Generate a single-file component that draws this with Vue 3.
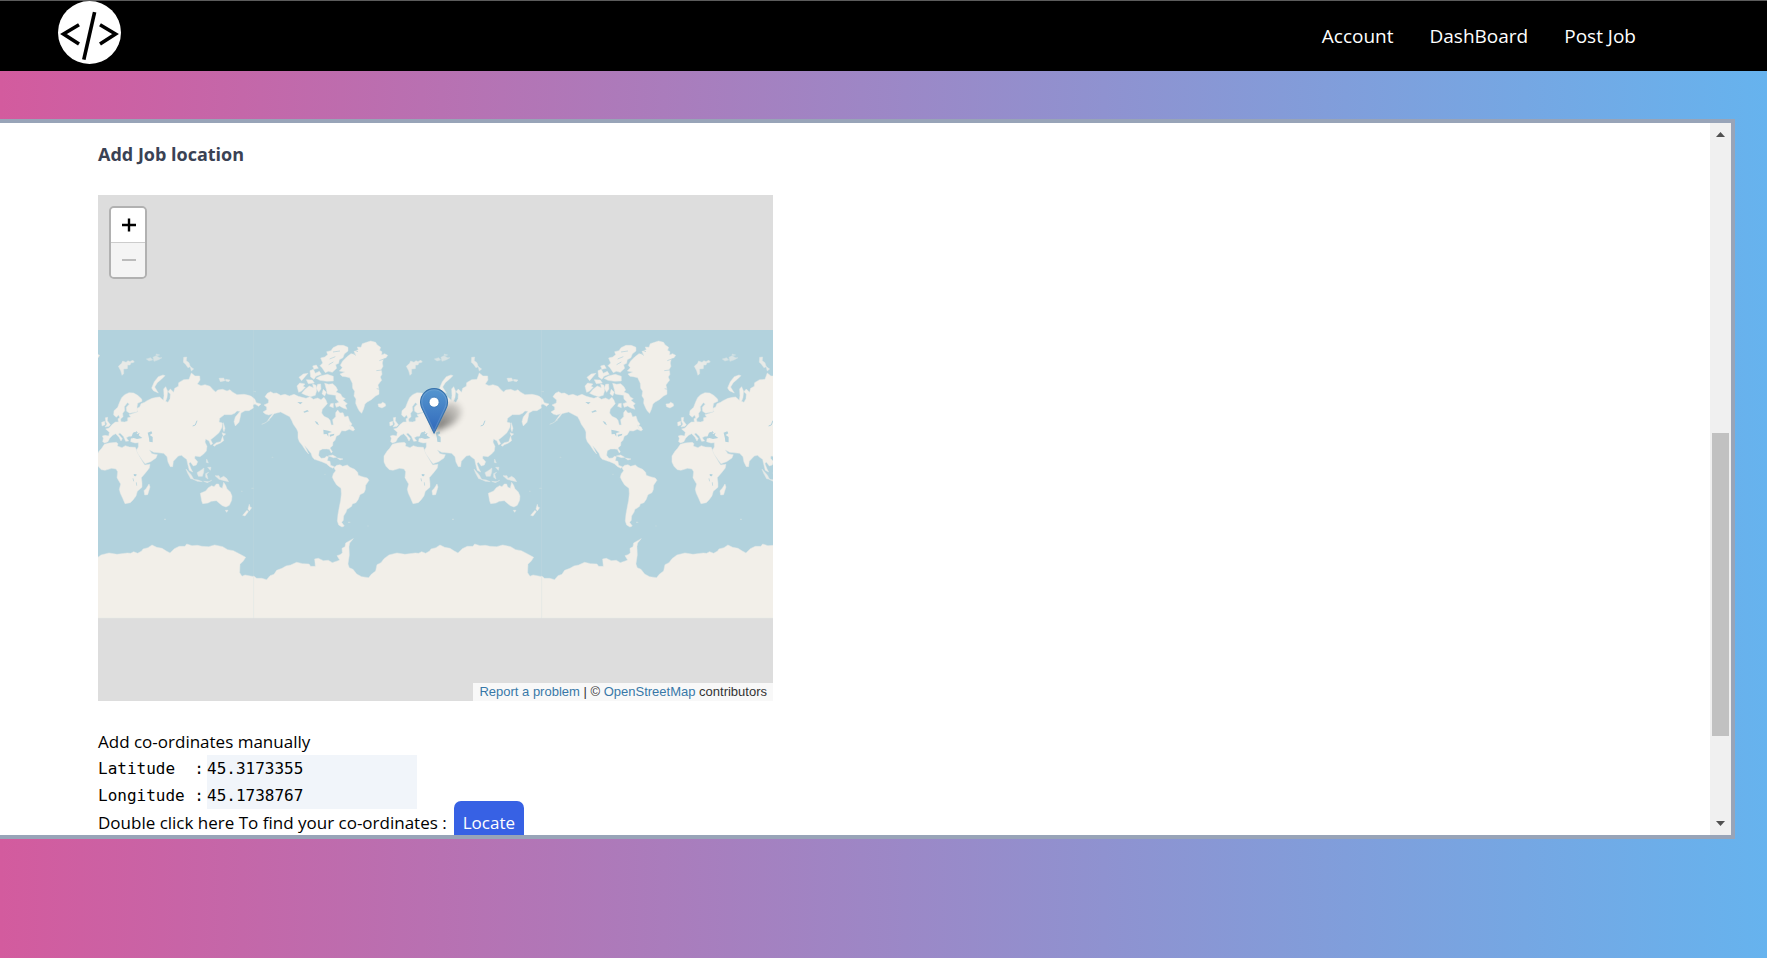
<script setup>
import { ref } from 'vue'

const links = ['Account', 'DashBoard', 'Post Job']
const latitude = ref('45.3173355')
const longitude = ref('45.1738767')
const worldOffsets = [-864, 0, 864]
</script>

<template>
  <div class="page">
    <header class="topbar">
      <a href="#" class="logo" aria-label="Home">
        <svg viewBox="0 0 63 63" width="63" height="63" aria-hidden="true">
          <circle cx="31.5" cy="31.5" r="31.5" fill="#fff" />
          <g fill="none" stroke="#000" stroke-width="3.6">
            <path d="M21 23.8 L5.5 33 L21 43" />
            <path d="M42 23.8 L57.5 33 L42 43" />
            <path d="M36.6 11.2 L25.8 58.6" />
          </g>
        </svg>
      </a>
      <nav class="nav">
        <a v-for="link in links" :key="link" href="#">{{ link }}</a>
      </nav>
    </header>

    <main class="panel">
      <section class="content">
        <h2 class="title">Add Job location</h2>

        <div class="map">
          <svg class="tiles" viewBox="0 0 675 506" width="675" height="506" role="img" aria-label="World map">
            <defs>
              <linearGradient id="pinFill" x1="0" y1="0" x2="0" y2="1">
                <stop offset="0" stop-color="#5596cf" />
                <stop offset="1" stop-color="#3068bb" />
              </linearGradient>
              <filter id="soft" x="-50%" y="-50%" width="200%" height="200%">
                <feGaussianBlur stdDeviation="3" />
              </filter>
              <linearGradient id="shade" x1="0" y1="1" x2="1" y2="0">
                <stop offset="0" stop-color="#000" stop-opacity=".85" />
                <stop offset="1" stop-color="#000" stop-opacity=".08" />
              </linearGradient>
              <g id="world">
                <g fill="#f2efe9" stroke="#e4e9e6" stroke-width="1.5" stroke-linejoin="round">
                  <path d="M45 215 L52 205 L62 200 L70 205 L80 204 L92 211 L105 208 L118 213 L132 208 L145 214 L156 217 L168 220 L180 215 L190 223 L203 219 L213 224 L222 217 L228 226 L232 236 L224 245 L217 253 L215 264 L222 274 L235 280 L240 286 L244 300 L250 300 L248 284 L257 275 L257 263 L263 255 L270 264 L279 263 L284 276 L294 273 L299 288 L306 297 L300 306 L312 313 L310 318 L298 313 L286 318 L275 317 L268 329 L259 334 L255 346 L249 352 L248 362 L240 369 L247 380 L244 384 L238 373 L230 372 L218 372 L208 377 L206 391 L213 400 L224 399 L229 394 L235 395 L232 407 L240 409 L242 421 L253 425 L249 430 L239 425 L229 416 L215 410 L202 406 L193 403 L187 396 L183 385 L172 371 L164 362 L176 387 L168 378 L156 360 L148 350 L144 339 L144 321 L140 312 L130 298 L126 288 L119 275 L105 268 L92 261 L80 264 L72 266 L64 277 L53 287 L62 274 L68 266 L56 270 L46 267 L39 261 L50 254 L50 246 L42 240 L55 234 L56 225 Z" />
                  <path d="M252 428 L260 421 L270 419 L278 424 L292 420 L300 427 L314 433 L323 442 L325 451 L337 455 L352 459 L357 466 L347 481 L346 494 L342 503 L330 509 L325 523 L318 533 L307 537 L305 544 L298 549 L291 553 L288 562 L281 573 L280 586 L275 592 L283 603 L276 606 L266 600 L262 588 L264 568 L268 546 L272 526 L274 507 L273 490 L260 480 L252 467 L247 457 L250 446 L257 437 Z" />
                  <path d="M268 138 L277 128 L271 121 L278 108 L290 96 L303 86 L316 87 L312 79 L325 74 L322 66 L333 67 L337 56 L350 52 L362 48 L377 52 L381 59 L392 67 L389 76 L396 80 L395 90 L404 86 L413 91 L408 99 L400 102 L397 114 L399 124 L394 133 L396 148 L391 156 L395 166 L390 172 L384 180 L387 193 L387 208 L377 213 L364 224 L352 231 L345 237 L341 251 L335 265 L328 258 L323 249 L317 235 L318 222 L312 213 L314 199 L308 190 L307 175 L299 158 L286 155 L276 154 L270 147 L284 141 Z" />
                  <path d="M224 96 L233 89 L230 80 L243 77 L249 68 L264 61 L280 61 L294 67 L294 78 L283 87 L279 98 L268 104 L266 115 L257 119 L260 130 L247 142 L235 139 L226 143 L216 128 L210 122 L218 114 L212 99 Z" />
                  <path d="M211 153 L232 148 L250 154 L250 168 L230 169 L210 166 L198 160 Z M180 137 L190 133 L196 145 L208 139 L214 148 L198 154 L192 163 L182 156 Z M147 157 L160 147 L174 145 L165 155 L155 167 Z M188 123 L199 120 L205 130 L192 133 Z M141 183 L149 174 L165 177 L159 184 L166 187 L154 199 L146 202 Z M166 192 L178 183 L190 188 L188 177 L198 181 L200 197 L196 211 L182 215 L166 210 L155 205 Z M169 164 L187 165 L193 174 L175 176 Z M203 178 L212 177 L213 192 L206 202 L199 190 Z M220 193 L229 202 L224 213 L216 206 Z M224 175 L236 178 L248 176 L258 185 L263 195 L258 201 L272 207 L277 216 L286 221 L279 226 L292 236 L286 241 L291 253 L279 249 L269 243 L259 247 L255 236 L267 232 L258 222 L257 211 L244 209 L232 207 L229 193 Z M242 236 L250 235 L250 248 L239 244 Z" />
                  <path d="M384 237 L393 236 L398 232 L406 236 L407 243 L396 249 L386 245 Z M298 300 L310 306 L314 315 L305 315 Z" />
                  <path d="M235 393 L248 390 L260 397 L251 398 Z M262 399 L279 402 L270 405 Z" />
                  <path d="M402 411 L402 393 L411 379 L419 370 L427 358 L441 354 L463 352 L468 356 L466 363 L480 368 L490 362 L502 366 L520 367 L525 379 L533 395 L541 409 L548 420 L564 418 L562 429 L551 443 L538 458 L540 473 L540 487 L526 499 L522 513 L513 525 L505 533 L489 536 L482 520 L475 505 L472 493 L476 477 L470 467 L465 458 L467 440 L462 432 L449 430 L429 436 L418 434 L408 424 Z" />
                  <path d="M561 477 L564 486 L557 509 L548 510 L546 497 L553 490 Z" />
                  <path d="M715 505 L731 498 L739 488 L749 482 L756 485 L763 477 L770 477 L773 486 L781 490 L785 472 L791 481 L795 491 L805 501 L810 513 L809 526 L802 541 L792 546 L781 542 L772 535 L763 527 L748 529 L738 534 L722 536 L719 528 Z M790 556 L798 556 L794 562 Z" />
                  <path d="M862 538 L864 546 L869 548 L862 558 L858 552 Z M855 556 L859 560 L849 573 L842 571 Z" />
                  <path d="M11 753 L20 760 L35 760 L50 764 L60 752 L72 748 L80 736 L96 730 L108 723 L122 720 L140 712 L158 716 L177 717 L182 724 L196 724 L194 702 L205 700 L220 707 L235 706 L247 713 L262 708 L269 705 L261 692 L270 689 L277 684 L276 670 L285 665 L287 654 L310 641 L299 654 L297 665 L298 690 L294 717 L298 728 L309 733 L320 747 L335 755 L356 758 L364 748 L377 738 L381 719 L393 713 L402 701 L417 690 L441 684 L465 688 L496 684 L506 685 L515 680 L527 685 L539 678 L543 672 L558 668 L570 660 L584 667 L600 670 L613 678 L624 684 L637 671 L652 664 L669 664 L674 657 L690 662 L706 661 L720 664 L740 665 L758 660 L782 665 L797 674 L814 677 L833 687 L851 697 L844 708 L834 718 L833 743 L840 754 L849 750 L876 755 V879 H11 Z" />
                </g>
                <g transform="translate(385 0)" fill="#f2efe9" stroke="#e4e9e6" stroke-width="1.5" stroke-linejoin="round">
                  <path d="M37 350 L39 340 L36 333 L44 331 L55 333 L57 322 L46 312 L56 309 L66 298 L75 291 L84 291 L83 281 L90 278 L92 290 L103 291 L112 288 L112 278 L121 276 L116 269 L132 264 L143 260 L136 252 L148 246 L152 236 L163 232 L170 227 L185 220 L199 217 L208 216 L219 226 L221 212 L220 192 L226 185 L232 199 L230 218 L226 229 L233 232 L239 221 L240 207 L233 200 L240 192 L250 202 L253 190 L264 184 L265 173 L280 164 L296 163 L303 144 L314 153 L328 153 L329 165 L321 177 L332 182 L344 179 L359 184 L368 194 L376 201 L382 195 L397 193 L410 198 L419 194 L426 201 L440 209 L461 208 L475 211 L483 214 L493 222 L498 233 L512 237 L505 244 L494 237 L488 240 L489 249 L476 257 L464 257 L452 264 L449 280 L446 292 L435 303 L431 290 L435 276 L449 259 L440 258 L433 265 L423 269 L402 269 L388 280 L386 291 L396 294 L395 307 L386 323 L374 334 L361 344 L367 356 L361 360 L356 348 L346 342 L344 351 L350 364 L348 378 L339 388 L329 395 L314 393 L313 400 L322 410 L318 420 L309 423 L300 411 L296 416 L302 431 L307 441 L297 436 L293 421 L289 403 L280 397 L274 391 L264 393 L249 409 L247 425 L240 425 L233 411 L230 395 L220 385 L190 382 L177 375 L185 386 L201 389 L197 399 L181 410 L164 416 L155 404 L143 387 L138 376 L144 366 L144 353 L134 354 L121 350 L122 341 L137 337 L124 334 L116 334 L108 338 L115 348 L106 349 L99 334 L89 324 L84 327 L96 341 L92 348 L86 337 L76 326 L67 331 L58 340 L53 350 L43 354 Z" />
                  <path d="M70 270 L71 257 L82 247 L88 231 L94 218 L103 209 L116 203 L130 204 L142 211 L154 222 L155 229 L142 235 L140 246 L141 260 L118 265 L109 259 L108 247 L117 237 L111 233 L102 245 L103 257 L97 265 L98 275 L90 283 L85 270 L78 277 Z" />
                  <path d="M45 278 L52 277 L51 287 L60 299 L56 304 L44 306 L50 297 L46 290 Z M34 292 L43 289 L44 299 L35 303 Z" />
                  <path d="M84 124 L94 115 L97 108 L107 112 L113 107 L123 112 L119 120 L112 120 L111 131 L100 132 L100 146 L95 151 L91 137 Z M120 109 L128 106 L132 111 L124 114 Z" opacity=".85" />
                  <path d="M168 102 L181 98 L187 105 L176 108 Z M188 97 L197 92 L208 98 L215 98 L205 104 L191 109 Z M197 87 L208 90 L199 92 Z" opacity=".6" />
                  <path d="M280 97 L289 96 L288 107 L296 113 L300 125 L293 128 L285 117 L279 112 Z M299 124 L310 132 L303 138 Z M386 160 L400 159 L404 167 L390 170 Z M406 163 L419 165 L415 170 L406 168 Z" opacity=".85" />
                  <path d="M218 150 L204 155 L192 170 L184 189 L189 197 L204 204 L193 186 L201 173 L214 162 L224 152 Z" />
                  <path d="M399 293 L404 310 L401 320 L398 312 Z M395 323 L406 327 L399 333 Z M397 334 L400 347 L389 355 L376 360 L374 364 L368 361 L378 353 L391 350 Z" />
                  <path d="M320 443 L334 434 L341 429 L340 442 L336 454 L324 454 Z M287 432 L303 450 L310 463 L301 461 L292 445 Z M308 463 L324 465 L336 470 L321 469 Z M346 446 L355 442 L349 447 L353 462 L346 457 Z M374 452 L386 452 L389 460 L400 454 L409 460 L415 470 L401 467 L386 463 Z M349 402 L354 414 L348 412 Z M352 427 L362 427 L360 436 Z M340 469 L356 470 L364 466 L351 473 Z" opacity=".85" />
                </g>
                <g fill="#b2d2dd">
                  <path d="M508 337 L513 323 L520 320 L526 327 L533 323 L530 331 L541 339 L525 342 Z" />
                  <path d="M557 323 L568 319 L571 325 L563 330 L572 336 L572 352 L562 350 L561 340 Z" />
                  <path d="M515 447 L524 448 L522 454 L516 453 Z M523 318 L528 323 L521 324 Z" />
                  <path d="M220 314 L235 317 L246 321 L235 324 L235 335 L230 327 L221 328 Z M239 329 L253 326 L252 331 L240 335 Z M194 288 L202 291 L207 301 L200 297 Z M142 231 L158 232 L151 238 Z M160 260 L172 255 L177 259 L163 263 Z M237 247 L252 253 L252 272 L249 282 L241 274 Z" />
                </g>
                <g fill="none" stroke="#b2d2dd" stroke-width="3">
                  <path d="M692 303 L700 300 L705 287" />
                  <path d="M300 80 L318 91 M304 72 L324 80 M388 107 L410 99 M379 137 L396 135 M380 191 L389 193" stroke-width="2" />
                  <path d="M239 102 L256 95 M236 119 L250 111 M249 81 L270 78" stroke-width="2" />
                  <path d="M513 460 L515 469 M523 472 L524 482" stroke-width="2" />
                </g>
                <g fill="none" stroke="#dbe5e4" stroke-width="2">
                  <path d="M35 298 L45 294 L60 284" />
                  <path d="M294 592 h7 M606 583 h6" />
                  <path d="M65 397 h5 M223 448 h4 M352 603 h4 M837 499 h5 M868 490 h7 M875 200 h7" opacity=".6" />
                </g>
                <path d="M11 15 V879" stroke="#dbe3e2" stroke-width="2" opacity=".25" />
              </g>
            </defs>
            <rect y="135" width="675" height="288" fill="#b2d2dd" />
            <g transform="translate(152 135) scale(.3333)">
              <g transform="translate(0 -15)">
                <use v-for="offset in worldOffsets" :key="offset" href="#world" :x="offset" />
              </g>
            </g>
            <path d="M336 237 C338 222 345 208 355 207 C367 210 366 222 353 230 Z" fill="url(#shade)" opacity=".7" filter="url(#soft)" />
            <g transform="translate(322 193) scale(1.125)">
              <path d="M12.5 .5 C5.9 .5 .5 5.9 .5 12.6 C.5 15 1.3 17.2 2.3 19.2 L12.5 40 L22.7 19.2 C23.7 17.2 24.5 15 24.5 12.6 C24.5 5.9 19.1 .5 12.5 .5 Z" fill="url(#pinFill)" stroke="#3873ac" />
              <path d="M12.5 1.6 C6.5 1.6 1.6 6.5 1.6 12.6 C1.6 14.8 2.3 16.8 3.3 18.7 L12.5 38 L21.7 18.7 C22.7 16.8 23.4 14.8 23.4 12.6 C23.4 6.5 18.5 1.6 12.5 1.6 Z" fill="none" stroke="#fff" stroke-opacity=".13" />
              <circle cx="12.5" cy="12.6" r="4.5" fill="#fff" stroke="#3a78b7" stroke-width=".8" />
            </g>
          </svg>

          <div class="zoom">
            <button type="button" aria-label="Zoom in">
              <svg viewBox="0 0 14 14" width="14" height="14"><path d="M0 7 H14 M7 0.5 V13.5" stroke="#000" stroke-width="2.4" /></svg>
            </button>
            <button type="button" aria-label="Zoom out" disabled>
              <svg viewBox="0 0 14 14" width="14" height="14"><path d="M0 7 H14" stroke="#bbb" stroke-width="2" /></svg>
            </button>
          </div>

          <div class="credit">
            <a href="#">Report a problem</a> | © <a href="#">OpenStreetMap</a> contributors
          </div>
        </div>

        <form class="coords" @submit.prevent>
          <p>Add co-ordinates manually</p>
          <div class="field">
            <label for="lat">Latitude&nbsp; :</label>
            <input id="lat" v-model="latitude" type="text" />
          </div>
          <div class="field">
            <label for="lng">Longitude :</label>
            <input id="lng" v-model="longitude" type="text" />
          </div>
          <div class="locate">
            <span>Double click here To find your co-ordinates :</span>
            <button type="button">Locate</button>
          </div>
        </form>
      </section>

      <div class="scrollbar" aria-hidden="true">
        <svg viewBox="0 0 9 5" width="9" height="5"><path d="M0 5 L4.5 0 L9 5 Z" fill="#505050" /></svg>
        <div class="track"><div class="thumb"></div></div>
        <svg viewBox="0 0 9 5" width="9" height="5"><path d="M0 0 L4.5 5 L9 0 Z" fill="#505050" /></svg>
      </div>
    </main>
  </div>
</template>

<style>
body {
  margin: 0;
}
</style>

<style scoped>
.page {
  box-sizing: border-box;
  height: 100vh;
  display: flex;
  flex-direction: column;
  background: linear-gradient(to right, #d35b9e, #66b3ee);
  font-family: "Open Sans", "Noto Sans", sans-serif;
  font-size: 17px;
  line-height: 27px;
  color: #000;
}

.topbar {
  box-sizing: border-box;
  height: 71px;
  flex: none;
  display: flex;
  justify-content: space-between;
  padding: 0 131px 0 58px;
  background: #000;
  border-top: 1px solid #5c5c5c;
}

.logo,
.logo svg {
  display: block;
  height: 63px;
}

.nav {
  display: flex;
  align-items: center;
  gap: 36px;
  font-size: 19px;
}

.nav a {
  color: #fff;
  text-decoration: none;
}

.panel {
  flex: 1;
  min-height: 0;
  display: flex;
  margin: 48px 32px 119px 0;
  border: 4px solid #98a4b8;
  border-left: 0;
  background: #fff;
}

.content {
  flex: 1;
  overflow: hidden;
  padding: 18px 98px 0;
}

.title {
  margin: 0 0 27px;
  font-size: 18px;
  line-height: 27px;
  font-weight: 700;
  color: #3a4254;
}

.map {
  position: relative;
  width: 675px;
  max-width: 100%;
  overflow: hidden;
  background: #ddd;
}

.tiles {
  display: block;
}

.zoom {
  position: absolute;
  top: 11px;
  left: 11px;
  border: 2px solid #b1b1b1;
  border-radius: 5px;
  overflow: hidden;
}

.zoom button {
  display: flex;
  align-items: center;
  justify-content: center;
  width: 34px;
  height: 34px;
  padding: 0 0 0 2px;
  border: 0;
  background: #fff;
}

.zoom button + button {
  height: 35px;
  border-top: 1px solid #ccc;
  background: #f4f4f4;
}

.credit {
  position: absolute;
  right: 0;
  bottom: 0;
  padding: 0 6px;
  background: #f8f8f8;
  color: #333;
  font: 13px/18px "Liberation Sans", Arial, sans-serif;
}

.credit a {
  color: #3878a8;
  text-decoration: none;
}

.coords {
  margin-top: 27px;
}

.coords p {
  margin: 0;
}

.field {
  display: flex;
  font-family: "DejaVu Sans Mono", monospace;
  font-size: 16px;
}

.field label {
  width: 109px;
}

.field input {
  box-sizing: border-box;
  width: 210px;
  height: 27px;
  padding: 0;
  border: 0;
  background: #f1f5fa;
  color: #000;
  font: inherit;
}

.locate {
  display: flex;
  gap: 7px;
}

.locate button {
  align-self: flex-start;
  margin-top: -8px;
  padding: 8px 9px;
  border: 0;
  border-radius: 7px;
  background: #3761e4;
  color: #fff;
  font: inherit;
}

.scrollbar {
  flex: none;
  box-sizing: border-box;
  width: 21px;
  display: flex;
  flex-direction: column;
  align-items: center;
  padding: 9px 0;
  background: #f0f0f0;
}

.track {
  box-sizing: border-box;
  flex: 1;
  width: 17px;
  padding: 296px 0 85px;
}

.thumb {
  height: 100%;
  background: #c1c1c1;
}
</style>
